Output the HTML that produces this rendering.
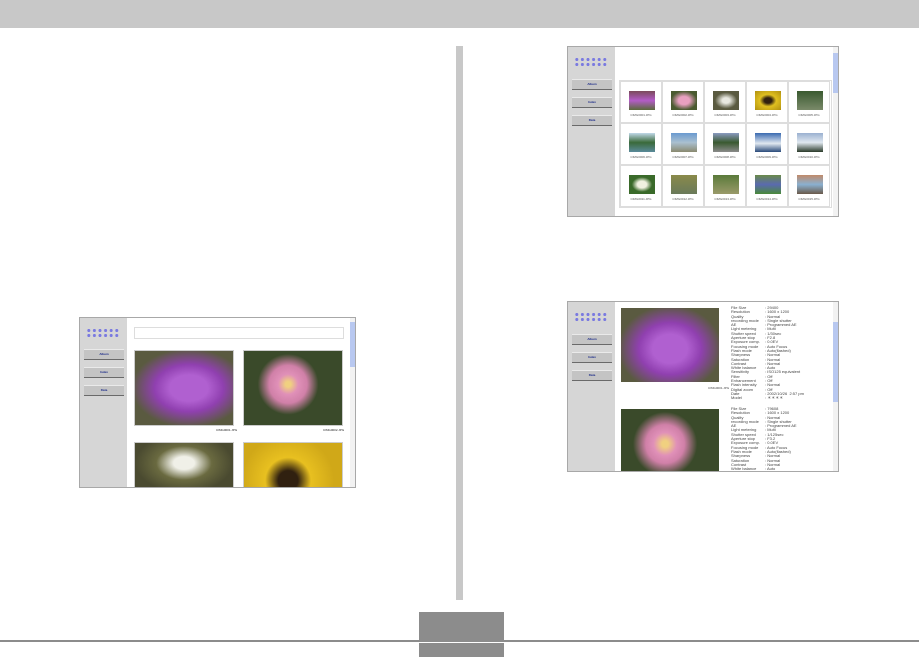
<!DOCTYPE html>
<html><head><style>
body{margin:0;width:919px;height:657px;background:#fff;position:relative;overflow:hidden;font-family:"Liberation Sans",sans-serif}
.a{position:absolute}
.win{position:absolute;background:#fff;border:1px solid #a8a8a8;box-sizing:border-box;overflow:hidden}
.side{position:absolute;left:0;top:0;bottom:0;width:47px;background:#d6d6d6}
.btn{position:absolute;left:4px;width:40px;height:9px;background:#c4c4c4;border-bottom:1px solid #6a6a6a;border-top:1px solid #eaeaea;font-size:3px;color:#1a2a88;text-align:center;line-height:9px;font-weight:bold}
.logo{position:absolute;left:6px;top:10px;width:34px;height:10px;background:
radial-gradient(circle,#7a7ae0 40%,transparent 45%) 0 0/5.6px 5px}
.sb{position:absolute;right:0;top:0;bottom:0;width:5px;background:#f2f2f2}
.sb i{position:absolute;left:0;right:0;top:6px;height:40px;background:#b8c8f0}
.cell{position:absolute;width:42px;height:42px;border:1px solid #ddd;box-sizing:border-box;background:#fff}
.cell b{position:absolute;left:8px;top:9px;width:26px;height:19px}
.cell s{position:absolute;left:0;right:0;top:31px;font-size:3px;text-align:center;color:#555;text-decoration:none}
.tx{position:absolute;font-size:4px;line-height:4.3px;color:#444;white-space:pre}
</style></head><body>
<div class="a" style="left:0;top:0;width:919px;height:28px;background:#c8c8c8"></div>
<div class="a" style="left:456px;top:46px;width:7px;height:554px;background:#c8c8c8"></div>
<div class="a" style="left:0;top:640px;width:919px;height:2px;background:#8c8c8c"></div>
<div class="a" style="left:419px;top:612px;width:85px;height:28px;background:#8c8c8c"></div>
<div class="a" style="left:419px;top:643px;width:85px;height:14px;background:#8c8c8c"></div>

<!-- right top -->
<div class="win" style="left:567px;top:46px;width:272px;height:171px">
<div class="side"><div class="logo"></div>
<div class="btn" style="top:32px">Album</div><div class="btn" style="top:50px">Index</div><div class="btn" style="top:68px">Data</div></div>
<div class="sb"><i></i></div>
<div class="a" style="left:51px;top:33px;width:211px;height:126px;border:1px solid #ddd">
<div class="cell" style="left:0;top:0"><b style="background:linear-gradient(#7a4a5a,#b35cc8,#5a6a3a)"></b><s>CIMG0001.JPG</s></div>
<div class="cell" style="left:42px;top:0"><b style="background:radial-gradient(#e8a0c0 30%,#4a5a30 70%)"></b><s>CIMG0002.JPG</s></div>
<div class="cell" style="left:84px;top:0"><b style="background:radial-gradient(#e8e8e0 20%,#5a5a40 60%)"></b><s>CIMG0003.JPG</s></div>
<div class="cell" style="left:126px;top:0"><b style="background:radial-gradient(#302010 20%,#e0c020 45%,#b09010)"></b><s>CIMG0004.JPG</s></div>
<div class="cell" style="left:168px;top:0"><b style="background:linear-gradient(#3a5a30,#7a8a6a)"></b><s>CIMG0005.JPG</s></div>
<div class="cell" style="left:0;top:42px"><b style="background:linear-gradient(#c0d8e8,#3a6a3a 50%,#5a8a9a)"></b><s>CIMG0006.JPG</s></div>
<div class="cell" style="left:42px;top:42px"><b style="background:linear-gradient(#6a9ad0,#aac0d0 50%,#8a8a70)"></b><s>CIMG0007.JPG</s></div>
<div class="cell" style="left:84px;top:42px"><b style="background:linear-gradient(#8a9ac0,#3a5a30 50%,#8a8a8a)"></b><s>CIMG0008.JPG</s></div>
<div class="cell" style="left:126px;top:42px"><b style="background:linear-gradient(#3a6ab0,#e0e8f0 55%,#2a4a7a)"></b><s>CIMG0009.JPG</s></div>
<div class="cell" style="left:168px;top:42px"><b style="background:linear-gradient(#9ab0d0,#e0e8f0 50%,#2a3a2a)"></b><s>CIMG0010.JPG</s></div>
<div class="cell" style="left:0;top:84px"><b style="background:radial-gradient(#f0f0e0 25%,#3a6a2a 55%)"></b><s>CIMG0011.JPG</s></div>
<div class="cell" style="left:42px;top:84px"><b style="background:linear-gradient(#8a8a4a,#6a7a5a)"></b><s>CIMG0012.JPG</s></div>
<div class="cell" style="left:84px;top:84px"><b style="background:linear-gradient(#5a7a3a,#9a9a6a)"></b><s>CIMG0013.JPG</s></div>
<div class="cell" style="left:126px;top:84px"><b style="background:linear-gradient(#6a8a4a,#5a6ab0 50%,#4a8a3a)"></b><s>CIMG0014.JPG</s></div>
<div class="cell" style="left:168px;top:84px"><b style="background:linear-gradient(#c08a6a,#8ab0d0 50%,#6a5a4a)"></b><s>CIMG0015.JPG</s></div>
</div></div>

<!-- right bottom -->
<div class="win" style="left:567px;top:301px;width:272px;height:171px">
<div class="side"><div class="logo"></div>
<div class="btn" style="top:32px">Album</div><div class="btn" style="top:50px">Index</div><div class="btn" style="top:68px">Data</div></div>
<div class="sb"><i style="top:20px;height:80px"></i></div>
<div class="a" style="left:53px;top:6px;width:98px;height:74px;background:radial-gradient(ellipse at 50% 55%,#b060d0 25%,#9040b0 45%,#5a5a40 75%)"></div>
<div class="tx" style="left:140px;top:84px;font-size:3px">CIMG0001.JPG</div>
<div class="a" style="left:53px;top:107px;width:98px;height:70px;background:radial-gradient(circle at 45% 50%,#f0d080 5%,#e090b8 18%,#d080a8 30%,#3a4a2a 50%)"></div>
<div class="tx" style="left:163px;top:4px">File Size
Resolution
Quality
recording mode
AE
Light metering
Shutter speed
Aperture stop
Exposure comp.
Focusing mode
Flash mode
Sharpness
Saturation
Contrast
White balance
Sensitivity
Filter
Enhancement
Flash intensity
Digital zoom
Date
Model</div>
<div class="tx" style="left:197px;top:4px">: 29400
: 1600 x 1200
: Normal
: Single shutter
: Programmed AE
: Multi
: 1/30sec
: F2.8
: 0.0EV
: Auto Focus
: Auto(flashed)
: Normal
: Normal
: Normal
: Auto
: ISO125 equivalent
: Off
: Off
: Normal
: Off
: 2002/10/26  2:57 pm
: ＊＊＊＊</div>
<div class="tx" style="left:163px;top:105px">File Size
Resolution
Quality
recording mode
AE
Light metering
Shutter speed
Aperture stop
Exposure comp.
Focusing mode
Flash mode
Sharpness
Saturation
Contrast
White balance
Sensitivity</div>
<div class="tx" style="left:197px;top:105px">: 79608
: 1600 x 1200
: Normal
: Single shutter
: Programmed AE
: Multi
: 1/125sec
: F3.2
: 0.0EV
: Auto Focus
: Auto(flashed)
: Normal
: Normal
: Normal
: Auto
: ISO125 equivalent</div>
</div>

<!-- left -->
<div class="win" style="left:79px;top:317px;width:277px;height:171px">
<div class="side"><div class="logo"></div>
<div class="btn" style="top:31px">Album</div><div class="btn" style="top:49px">Index</div><div class="btn" style="top:67px">Data</div></div>
<div class="sb"><i style="top:4px;height:45px"></i></div>
<div class="a" style="left:54px;top:9px;width:208px;height:10px;border:1px solid #ddd"></div>
<div class="a" style="left:54px;top:32px;width:98px;height:74px;border:1px solid #ccc;background:radial-gradient(ellipse at 55% 50%,#b060d0 25%,#9040b0 45%,#5a5a40 75%)"></div>
<div class="a" style="left:163px;top:32px;width:98px;height:74px;border:1px solid #ccc;background:radial-gradient(circle at 45% 45%,#f0d080 4%,#e090b8 15%,#d080a8 28%,#3a4a2a 45%)"></div>
<div class="tx" style="left:136px;top:110px;font-size:3px;color:#222">CIMG0001.JPG</div>
<div class="tx" style="left:243px;top:110px;font-size:3px;color:#222">CIMG0002.JPG</div>
<div class="a" style="left:54px;top:124px;width:98px;height:50px;border:1px solid #ccc;background:radial-gradient(ellipse at 50% 40%,#f0f0e8 15%,#6a6a40 40%,#4a4a30 70%)"></div>
<div class="a" style="left:163px;top:124px;width:98px;height:50px;border:1px solid #ccc;background:radial-gradient(circle at 45% 75%,#302010 15%,#e8c020 35%,#d0a818 70%)"></div>
</div>
</body></html>
